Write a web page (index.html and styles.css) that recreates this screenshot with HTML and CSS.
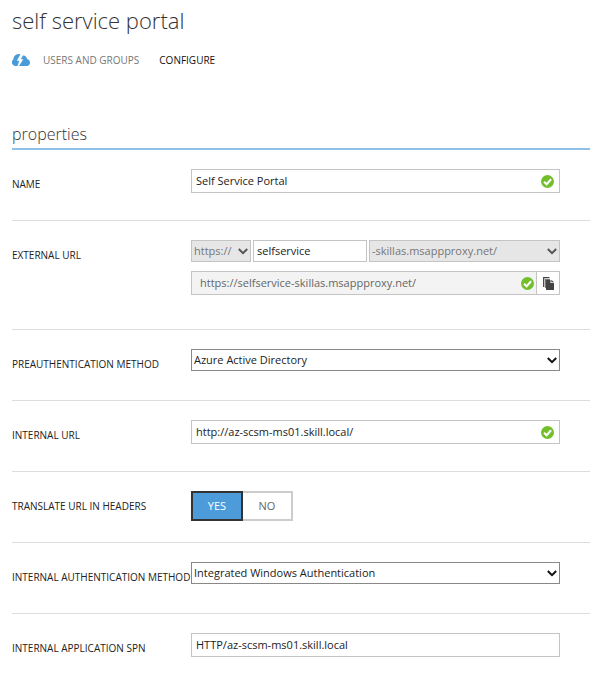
FILE: index.html
```html
<!DOCTYPE html>
<html lang="en">
<head>
<meta charset="utf-8">
<title>self service portal</title>
<link rel="stylesheet" href="styles.css">
</head>
<body>
<svg class="sprite" aria-hidden="true">
  <symbol id="check" viewBox="0 0 12 12"><circle cx="6" cy="6" r="6" fill="#72bf2b"/><path d="M2.8 6.2 5.2 8.5 9.3 3.9" fill="none" stroke="#fff" stroke-width="1.9"/></symbol>
  <symbol id="chevron" viewBox="0 0 10 7"><path d="M.8 1 5 5.2 9.2 1" fill="none" stroke="currentColor" stroke-width="2"/></symbol>
</svg>
<header class="head">
  <h1 class="title">self service portal</h1>
  <nav class="tabs">
    <a class="home" href="#" aria-label="Quick start">
      <svg class="cloud" viewBox="0 0 18 12"><path d="M3.400 12A3.500 3.500 0 0 1 1.400 5.600C1.500 2.200 4 0 7.300 .1L8.300 .4 4.800 6.700H7.300L5.500 12Z" fill="#4a9bd9"/><path d="M7 12 11.300 5.200H8.800L10.900 1.600C13 1.300 14.800 2.800 15 5.100 16.800 5.500 18 6.900 18 8.700 18 10.600 16.600 12 14.800 12Z" fill="#4a9bd9"/></svg>
    </a>
    <a class="tab" href="#">USERS AND GROUPS</a>
    <a class="tab current" href="#" aria-current="page">CONFIGURE</a>
  </nav>
</header>
<main class="properties">
  <h2 class="section">properties</h2>
  <form>
    <div class="row">
      <label class="label" for="name">NAME</label>
      <div class="field"><input class="box" id="name" type="text" value="Self Service Portal"><svg class="valid"><use href="#check"/></svg></div>
    </div>
    <div class="row tall">
      <label class="label" for="host">EXTERNAL URL</label>
      <div class="stack">
        <div class="url">
          <div class="field scheme"><select class="box disabled" aria-label="Scheme" disabled><option>https://</option></select><svg class="arrow muted"><use href="#chevron"/></svg></div>
          <div class="field host"><input class="box short" id="host" type="text" value="selfservice"></div>
          <div class="field domain"><select class="box disabled" aria-label="Domain" disabled><option>-skillas.msappproxy.net/</option></select><svg class="arrow muted"><use href="#chevron"/></svg></div>
        </div>
        <div class="result">
          <div class="field full"><input class="box readonly" type="text" aria-label="Full external URL" value="https://selfservice-skillas.msappproxy.net/" readonly><svg class="valid near"><use href="#check"/></svg></div>
          <button class="copy" type="button" aria-label="Copy URL"><svg class="pages" viewBox="0 0 11 13"><path d="M.7 10V.7H6.500" fill="none" stroke="#444" stroke-width="1.300"/><path d="M2 2H7V3H4V11H2Z" fill="#777"/><path d="M3 3H7.500V6H11V13H3Z" fill="#444"/><path d="M8.300 2.800 11 5.300H8.300Z" fill="#444"/></svg></button>
        </div>
      </div>
    </div>
    <div class="row">
      <label class="label" for="preauth">PREAUTHENTICATION METHOD</label>
      <div class="field"><select class="box choice" id="preauth"><option>Azure Active Directory</option></select><svg class="arrow"><use href="#chevron"/></svg></div>
    </div>
    <div class="row">
      <label class="label" for="internal">INTERNAL URL</label>
      <div class="field"><input class="box" id="internal" type="text" value="http://az-scsm-ms01.skill.local/"><svg class="valid"><use href="#check"/></svg></div>
    </div>
    <div class="row">
      <span class="label" id="translate">TRANSLATE URL IN HEADERS</span>
      <div class="toggle" role="group" aria-labelledby="translate"><button class="option on" type="button" aria-pressed="true">YES</button><button class="option" type="button" aria-pressed="false">NO</button></div>
    </div>
    <div class="row">
      <label class="label" for="auth">INTERNAL AUTHENTICATION METHOD</label>
      <div class="field"><select class="box choice" id="auth"><option>Integrated Windows Authentication</option></select><svg class="arrow"><use href="#chevron"/></svg></div>
    </div>
    <div class="row">
      <label class="label" for="spn">INTERNAL APPLICATION SPN</label>
      <div class="field"><input class="box" id="spn" type="text" value="HTTP/az-scsm-ms01.skill.local"></div>
    </div>
  </form>
</main>
</body>
</html>
```
FILE: styles.css
```css
* { box-sizing: border-box; }
body {
  margin: 0;
  padding-left: 12px;
  background: #fff;
  color: #222;
  font: 11px/16px "Open Sans", "Noto Sans", sans-serif;
}
.sprite { display: none; }
.title {
  margin: 0;
  padding-top: 4px;
  font-size: 22px;
  font-weight: 300;
  line-height: 32px;
  color: #333;
}
.tabs { display: flex; align-items: center; height: 20px; margin-top: 14px; }
.home { width: 31px; height: 12px; }
.cloud { display: block; width: 18px; height: 12px; }
.tab { margin-right: 20px; font-size: 10px; color: #777; text-decoration: none; }
.current { color: #111; }
.section {
  margin: 52px 0 0;
  height: 28px;
  border-bottom: 2px solid #8fc0e8;
  font-size: 16px;
  font-weight: 300;
  line-height: 24px;
  color: #333;
}
.row {
  display: grid;
  grid-template-columns: 179px minmax(0, 1fr);
  align-items: start;
  min-height: 71px;
  padding: 19px 30px 0 0;
  border-bottom: 1px solid #ddd;
}
.row:last-child { border-bottom: 0; }
.tall { min-height: 109px; }
.label { padding-top: 7px; font-size: 10px; white-space: nowrap; }
.field { position: relative; min-width: 0; }
.box {
  display: block;
  width: 100%;
  height: 24px;
  margin: 0;
  padding: 0 4px 1px;
  border: 1px solid #c4c4c4;
  border-radius: 0;
  background: #fff;
  color: #222;
  font: inherit;
  appearance: none;
}
select.box { height: 22px; padding: 0 2px; }
.short { height: 22px; padding: 0 3px 1px; }
.choice { border-color: #888; }
.disabled { background: #e6e6e6; color: #777; opacity: 1; }
.readonly { padding: 0 8px 1px; background: #f3f3f3; color: #666; }
.valid { position: absolute; top: 6px; right: 6px; width: 13px; height: 13px; }
.near { right: 3px; }
.arrow { position: absolute; top: 8px; right: 3px; width: 10px; height: 7px; color: #111; pointer-events: none; }
.muted { color: #555; }
.stack { display: grid; gap: 9px; }
.url { display: flex; gap: 2px; }
.scheme { flex: 60 1 0; }
.host { flex: 114 1 0; }
.domain { flex: 191 1 0; }
.result { display: flex; }
.full { flex: 1; }
.copy {
  display: grid;
  place-items: center;
  width: 23px;
  height: 24px;
  padding: 0;
  border: 1px solid #c4c4c4;
  border-left: 0;
  background: #fff;
}
.pages { width: 11px; height: 13px; }
.toggle { display: flex; height: 30px; }
.option {
  width: 50px;
  padding: 0;
  border: 2px solid #ccc;
  border-left: 0;
  background: #fff;
  color: #666;
  font: inherit;
}
.on { width: 52px; border: 2px solid #333; background: #4d9cd9; color: #fff; }
```
